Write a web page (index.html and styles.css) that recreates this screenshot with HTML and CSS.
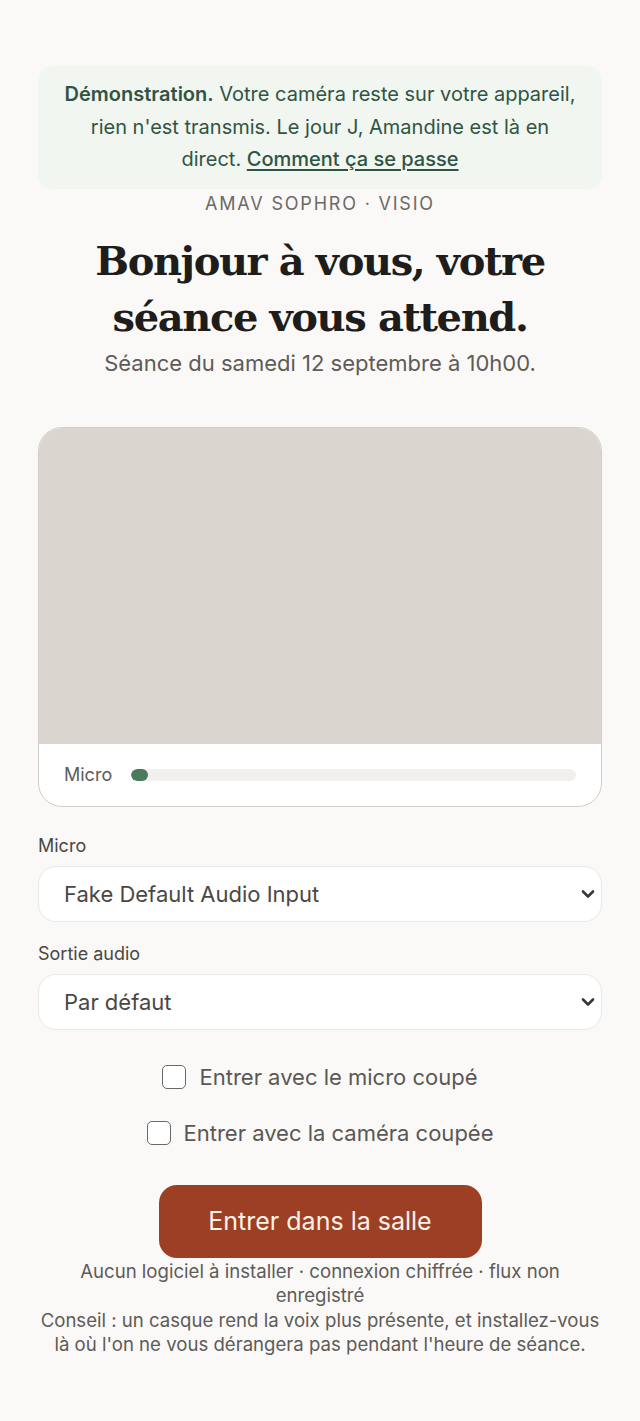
FILE: index.html
```html
<!DOCTYPE html>
<html lang="fr">
<head>
    <meta charset="UTF-8">
    <meta name="viewport" content="width=device-width, initial-scale=1.0">
    <title>Amav Sophro - Visio</title>
    <link rel="stylesheet" href="styles.css">
</head>
<body>
    <main class="lobby">
        <div class="demo-notice">
            <strong>Démonstration.</strong> Votre caméra reste sur votre appareil, rien n'est transmis. Le jour J, Amandine est là en direct. <a href="#">Comment ça se passe</a>
        </div>

        <p class="brand">AMAV SOPHRO · VISIO</p>
        <h1>Bonjour à vous, votre séance vous attend.</h1>
        <p class="session-date">Séance du samedi 12 septembre à 10h00.</p>

        <!-- Aperçu caméra + niveau micro -->
        <div class="preview">
            <div class="preview-video"></div>
            <div class="preview-meter">
                <span>Micro</span>
                <div class="meter"><div class="meter-fill" style="width: 17px"></div></div>
            </div>
        </div>

        <label class="field-label" for="mic">Micro</label>
        <div class="select-wrap">
            <select id="mic" class="device-select">
                <option>Fake Default Audio Input</option>
            </select>
            <svg class="chevron" width="14" height="10" viewBox="0 0 14 10"><path d="M2 2.5l5 5 5-5" fill="none" stroke="#3a3835" stroke-width="2.6" stroke-linecap="round" stroke-linejoin="round"/></svg>
        </div>

        <label class="field-label" for="out">Sortie audio</label>
        <div class="select-wrap">
            <select id="out" class="device-select">
                <option>Par défaut</option>
            </select>
            <svg class="chevron" width="14" height="10" viewBox="0 0 14 10"><path d="M2 2.5l5 5 5-5" fill="none" stroke="#3a3835" stroke-width="2.6" stroke-linecap="round" stroke-linejoin="round"/></svg>
        </div>

        <div class="options">
            <label class="check"><input type="checkbox"> Entrer avec le micro coupé</label>
            <label class="check"><input type="checkbox"> Entrer avec la caméra coupée</label>
        </div>

        <button class="enter-btn">Entrer dans la salle</button>

        <p class="footnote">Aucun logiciel à installer · connexion chiffrée · flux non enregistré</p>
        <p class="footnote">Conseil : un casque rend la voix plus présente, et installez-vous là où l'on ne vous dérangera pas pendant l'heure de séance.</p>
    </main>
</body>
</html>
```

FILE: styles.css
```css
/* Base */
body {
    margin: 0;
    background-color: #faf9f7;
    color: #222;
    font-family: Inter, "Noto Sans", sans-serif;
}

.lobby {
    max-width: 564px;
    margin: 0 auto;
    padding: 66px 0 40px;
    display: flex;
    flex-direction: column;
}

/* Bandeau démo */
.demo-notice {
    background-color: #f1f6f1;
    border-radius: 14px;
    padding: 12px 24px 13px;
    text-align: center;
    font-size: 20px;
    line-height: 32.5px;
    color: #2f5443;
}

.demo-notice strong {
    font-weight: 600;
}

.demo-notice a {
    color: #2f5443;
    font-weight: 500;
    text-decoration: underline;
    text-underline-offset: 3px;
}

.brand {
    margin: 3px 0 0;
    text-align: center;
    font-size: 18px;
    line-height: 24px;
    letter-spacing: 1.8px;
    color: #6b6966;
}

h1 {
    margin: 17px auto 0;
    max-width: 500px;
    text-align: center;
    font-family: "DejaVu Serif", "Liberation Serif", serif;
    font-size: 40px;
    line-height: 56px;
    font-weight: bold;
    letter-spacing: -1.4px;
    color: #1f1d1b;
}

.session-date {
    margin: 4px 0 0;
    text-align: center;
    font-size: 22px;
    line-height: 28px;
    color: #5e5b58;
}

/* Aperçu */
.preview {
    margin-top: 50px;
    border: 1px solid #d2cec9;
    border-radius: 24px;
    overflow: hidden;
    background-color: #fff;
}

.preview-video {
    height: 316px;
    background-color: #dbd5cf;
}

.preview-meter {
    display: flex;
    align-items: center;
    gap: 19px;
    padding: 0 25px;
    height: 62px;
    font-size: 18px;
    color: #5e5b58;
}

.meter {
    flex: 1;
    height: 12px;
    border-radius: 6px;
    background-color: #f2f0ee;
    overflow: hidden;
}

.meter-fill {
    height: 100%;
    border-radius: 6px;
    background-color: #4b7a5d;
}

/* Sélecteurs */
.field-label {
    margin-top: 28px;
    font-size: 18px;
    line-height: 22px;
    color: #4a4744;
}

.select-wrap {
    position: relative;
    margin-top: 9px;
}

.device-select {
    appearance: none;
    width: 100%;
    height: 56px;
    padding: 0 44px 0 25px;
    border: 1px solid #ebe7e3;
    border-radius: 18px;
    background-color: #fff;
    font-family: inherit;
    font-size: 22px;
    color: #4a4744;
}

.chevron {
    position: absolute;
    right: 7px;
    top: 23px;
    pointer-events: none;
}

.select-wrap + .field-label {
    margin-top: 21px;
}

/* Options */
.options {
    margin-top: 33px;
    display: flex;
    flex-direction: column;
    align-items: center;
    gap: 27px;
}

.check {
    display: flex;
    align-items: center;
    gap: 13px;
    font-size: 22px;
    line-height: 29px;
    color: #5a5754;
}

.check input {
    appearance: none;
    margin: 0;
    width: 24px;
    height: 24px;
    border: 1.5px solid #6b6966;
    border-radius: 5px;
    background-color: #fff;
}

/* Bouton principal */
.enter-btn {
    align-self: center;
    margin-top: 37px;
    width: 323px;
    height: 73px;
    border: none;
    border-radius: 18px;
    background-color: #9d3f24;
    color: #fdf1e8;
    font-family: inherit;
    font-size: 25px;
    cursor: pointer;
}

.footnote {
    margin: 0 auto;
    max-width: 520px;
    text-align: center;
    font-size: 18.6px;
    line-height: 24.6px;
    color: #5e5b58;
}

.footnote + .footnote {
    max-width: 564px;
}

.enter-btn + .footnote {
    margin-top: 1px;
}
```
